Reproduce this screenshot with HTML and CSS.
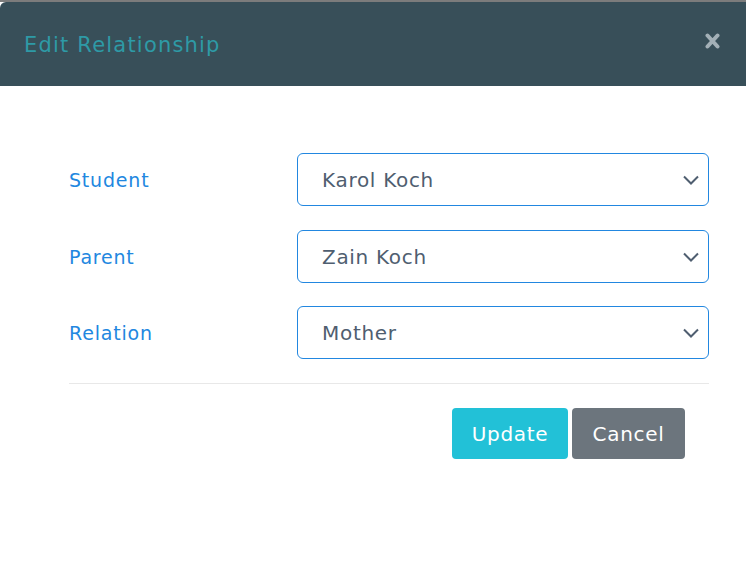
FILE: index.html
```html
<!DOCTYPE html>
<html>
<head>
<meta charset="utf-8">
<link rel="stylesheet" href="styles.css">
</head>
<body>
<div class="backdrop"></div>
<div class="modal">
  <div class="modal-header">
    <h1 class="modal-title">Edit Relationship</h1>
    <svg class="close" viewBox="0 0 15 16" width="15" height="16"><path d="M2.5 2.5 L12.5 13.5 M12.5 2.5 L2.5 13.5" stroke="#a3b0b7" stroke-width="4" stroke-linecap="round" fill="none"/></svg>
  </div>
  <div class="modal-body">
    <div class="form-row">
      <label class="label">Student</label>
      <div class="select"><span>Karol Koch</span>
        <svg class="chev" viewBox="0 0 16 10" width="16" height="10"><path d="M1 1.5 L8 8.5 L15 1.5" fill="none" stroke="#4f5e70" stroke-width="2"/></svg>
      </div>
    </div>
    <div class="form-row">
      <label class="label">Parent</label>
      <div class="select"><span>Zain Koch</span>
        <svg class="chev" viewBox="0 0 16 10" width="16" height="10"><path d="M1 1.5 L8 8.5 L15 1.5" fill="none" stroke="#4f5e70" stroke-width="2"/></svg>
      </div>
    </div>
    <div class="form-row">
      <label class="label">Relation</label>
      <div class="select"><span>Mother</span>
        <svg class="chev" viewBox="0 0 16 10" width="16" height="10"><path d="M1 1.5 L8 8.5 L15 1.5" fill="none" stroke="#4f5e70" stroke-width="2"/></svg>
      </div>
    </div>
    <div class="divider"></div>
    <div class="actions">
      <button class="btn btn-update">Update</button>
      <button class="btn btn-cancel">Cancel</button>
    </div>
  </div>
</div>
</body>
</html>
```
FILE: styles.css
```css
* { box-sizing: border-box; }
html, body { margin: 0; padding: 0; }
body {
  background: #ffffff;
  font-family: "DejaVu Sans", "Noto Sans", sans-serif;
  width: 746px;
  height: 580px;
  overflow: hidden;
}
.backdrop {
  height: 2px;
  background: #7c7c7c;
}
.modal {
  background: #ffffff;
}
.modal-header {
  height: 84px;
  background: #384f59;
  border-top-left-radius: 6px;
  display: flex;
  align-items: center;
  justify-content: space-between;
  padding: 0 26px 0 24px;
}
.modal-title {
  margin: 0;
  font-size: 21px;
  font-weight: 400;
  letter-spacing: 1.2px;
  color: #2e9aa6;
  margin-top: 1px;
}
.close {
  display: block;
  margin-top: -6px;
}
.modal-body {
  padding: 67px 37px 0 69px;
}
.form-row {
  display: grid;
  grid-template-columns: 228px 1fr;
  align-items: center;
  margin-bottom: 24px;
}
.form-row:nth-child(2) { margin-bottom: 23px; }
.label {
  color: #2287e0;
  font-size: 19px;
  letter-spacing: 0.8px;
}
.select {
  height: 53px;
  border: 1px solid #2287e0;
  border-radius: 6px;
  display: flex;
  align-items: center;
  justify-content: space-between;
  padding: 0 9px 0 24px;
  font-size: 20px;
  letter-spacing: 0.7px;
  color: #4f5e70;
}
.chev { display: block; }
.divider {
  height: 1px;
  background: #e8e8e8;
}
.actions {
  display: flex;
  justify-content: flex-end;
  gap: 4px;
  padding: 24px 24px 0 0;
}
.btn {
  font-family: inherit;
  border: none;
  color: #ffffff;
  font-size: 20px;
  letter-spacing: 0.7px;
  height: 51px;
  border-radius: 4px;
  padding: 0;
}
.btn-update {
  background: #22c1d7;
  width: 116px;
}
.btn-cancel {
  background: #6c757d;
  width: 113px;
}
```
